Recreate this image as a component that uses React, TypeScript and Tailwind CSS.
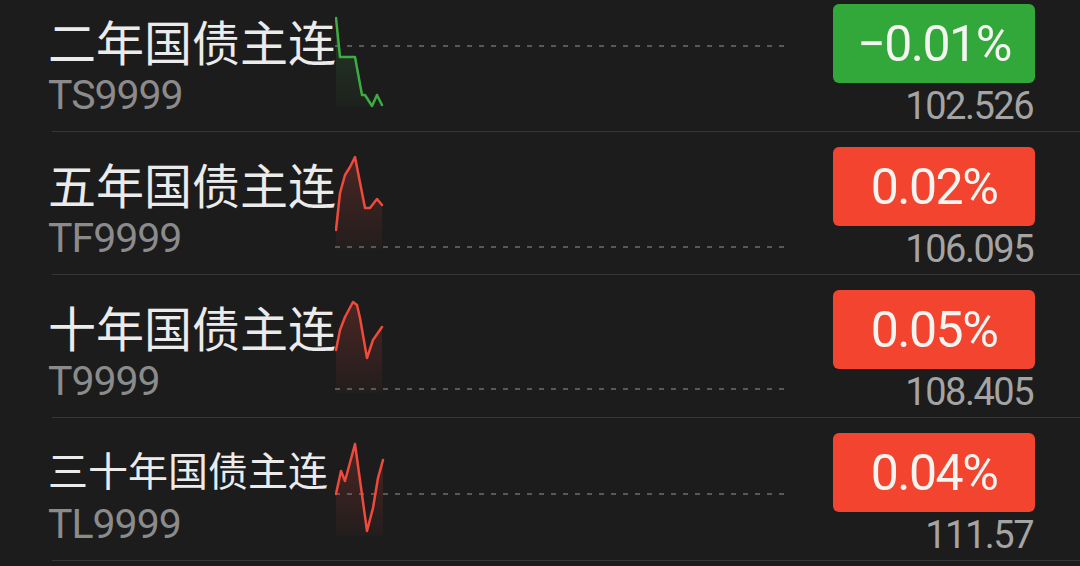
type Quote = {
  name: string
  code: string
  change: string
  price: string
  up: boolean
  small?: boolean
  ref: number // y of the dashed prev-close line
  pts: [number, number][]
}

const quotes: Quote[] = [
  {
    name: "二年国债主连",
    code: "TS9999",
    change: "−0.01%",
    price: "102.526",
    up: false,
    ref: 57,
    pts: [[1, 29], [5, 68], [20, 68], [27, 106], [30, 106], [37, 117], [42, 106], [47, 116]],
  },
  {
    name: "五年国债主连",
    code: "TF9999",
    change: "0.02%",
    price: "106.095",
    up: true,
    ref: 115,
    pts: [[1, 98], [5, 61], [10, 43], [15, 35], [20, 25], [30, 76], [35, 76], [42, 67], [47, 73]],
  },
  {
    name: "十年国债主连",
    code: "T9999",
    change: "0.05%",
    price: "108.405",
    up: true,
    ref: 114,
    pts: [[1, 75], [5, 55], [10, 42], [18, 27], [22, 30], [25, 43], [32, 83], [38, 65], [47, 52]],
  },
  {
    name: "三十年国债主连",
    code: "TL9999",
    change: "0.04%",
    price: "111.57",
    up: true,
    small: true,
    ref: 76,
    pts: [[1, 76], [6, 53], [10, 63], [20, 26], [32, 113], [38, 90], [43, 60], [48, 42]],
  },
]

const Spark = ({q, id}: {q: Quote; id: string}) => {
  const color = q.up ? "#ef4a3b" : "#3dac42"
  const line = q.pts.map(([x, y], i) => `${i ? "L" : "M"}${x} ${y}`).join(" ")
  const first = q.pts[0]
  const last = q.pts[q.pts.length - 1]
  const area = `${line} L${last[0]} 118 L${first[0]} 118 Z`
  return (
    <svg width={450} height={142} className="shrink-0">
      <defs>
        <linearGradient id={id} x1="0" y1="0" x2="0" y2="1">
          <stop offset="0" stopColor={color} stopOpacity="0.22" />
          <stop offset="1" stopColor={color} stopOpacity="0.03" />
        </linearGradient>
      </defs>
      <path d={area} fill={`url(#${id})`} />
      <line x1={0} x2={450} y1={q.ref} y2={q.ref} stroke="#6c6c6c" strokeWidth={1.5} strokeDasharray="5 7" />
      <path d={line} fill="none" stroke={color} strokeWidth={2.5} strokeLinejoin="round" strokeLinecap="round" />
    </svg>
  )
}

const Row = ({q, i}: {q: Quote; i: number}) => (
  <div className="flex flex-col">
    <div className="flex h-[142px]">
      <div className="w-[335px] shrink-0 pl-[48px] pt-[27px]">
        <div
          className={`h-[48px] whitespace-nowrap leading-[48px] text-[#ebebeb] font-['Noto_Sans_CJK_SC',sans-serif] ${q.small ? "text-[40px]" : "text-[48px]"}`}
        >
          {q.name}
        </div>
        <div className="mt-[11px] text-[41px] leading-none tracking-[-1px] text-[#8b8b8b] font-['Roboto',sans-serif]">
          {q.code}
        </div>
      </div>
      <Spark q={q} id={`g${i}`} />
      <div className="flex flex-1 flex-col items-end pr-[45px] pt-[15px] font-['Roboto',sans-serif]">
        <div
          className={`flex h-[79px] w-[202px] items-center justify-center rounded-[6px] text-[50px] leading-none tracking-[-1.5px] text-[#f4f4f0] ${q.up ? "bg-[#f2442f]" : "bg-[#33a83a]"}`}
        >
          {q.change}
        </div>
        <div className="mt-[4px] pr-[2px] text-[38px] leading-none tracking-[-1.5px] text-[#a4a4a4]">
          {q.price}
        </div>
      </div>
    </div>
    <div className="ml-[52px] h-px bg-[#363636]" />
  </div>
)

export default function App() {
  return (
    <div className="h-[566px] w-[1080px] overflow-hidden bg-[#1c1c1c]">
      <div className="-mt-[11px]">
        {quotes.map((q, i) => (
          <Row key={q.code} q={q} i={i} />
        ))}
      </div>
    </div>
  )
}
